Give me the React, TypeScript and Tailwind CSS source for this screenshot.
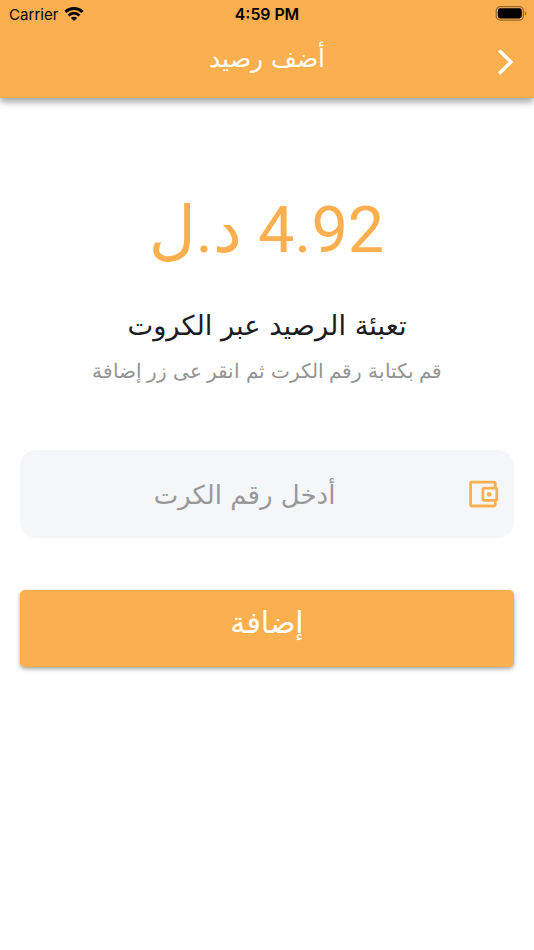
function WifiIcon() {
  return (
    <svg width="20" height="15" viewBox="0 0 20 15" fill="none" stroke="#000" strokeWidth="3">
      <path d="M1.4 4.9C6.3 0.4 13.7 0.4 18.6 4.9" />
      <path d="M4.5 8.5C7.7 5.6 12.3 5.6 15.5 8.5" />
      <path d="M10 14L6.9 10.9C8.7 9.4 11.3 9.4 13.1 10.9Z" fill="#000" stroke="none" />
    </svg>
  );
}

function BatteryIcon() {
  return (
    <svg width="32" height="15" viewBox="0 0 32 15" fill="none">
      <rect x="1.2" y="0.7" width="27.2" height="13.4" rx="4" stroke="#000" strokeOpacity="0.4" strokeWidth="1.2" />
      <rect x="2.8" y="2.3" width="24" height="10.2" rx="2.4" fill="#000" />
      <path d="M29.9 5.2C31.9 6 31.9 8.8 29.9 9.6Z" fill="#000" fillOpacity="0.45" />
    </svg>
  );
}

function WalletIcon() {
  return (
    <svg width="30" height="28" viewBox="0 0 30 28" fill="none" stroke="#fcaf4f" strokeWidth="2.8" strokeLinejoin="round">
      <path d="M26.2 8V3.6C26.2 2.7 25.7 2.2 24.8 2.2H3C2.1 2.2 1.6 2.7 1.6 3.6V24.6C1.6 25.5 2.1 26 3 26H24.8C25.7 26 26.2 25.5 26.2 24.6V20.5" />
      <rect x="13.9" y="8.1" width="13.9" height="12.2" rx="1.6" />
      <circle cx="20.1" cy="14.3" r="2.4" fill="#fcaf4f" stroke="none" />
    </svg>
  );
}

function StatusBar() {
  return (
    <div dir="ltr" className="grid h-[28px] grid-cols-[1fr_80px_1fr] items-center pl-[9px] pr-[7px] font-['Inter',sans-serif] text-black">
      <div className="flex items-center gap-[6px]">
        <span className="pt-px text-[15.1px] leading-none">Carrier</span>
        <WifiIcon />
      </div>
      <span className="pt-px pr-[2px] text-center text-[15.8px] leading-none font-semibold whitespace-nowrap">4:59 PM</span>
      <div className="flex justify-end pb-[2px]">
        <BatteryIcon />
      </div>
    </div>
  );
}

export default function App() {
  return (
    <div dir="rtl" className="h-[950px] w-[534px] overflow-hidden bg-white font-['DejaVu_Sans',sans-serif] font-normal">
      <header className="h-[98px] bg-[#fcaf4f] shadow-[0_4px_7px_rgba(0,0,0,0.36)]">
        <StatusBar />
        <div className="grid h-[70px] grid-cols-[60px_1fr_60px]">
          <button aria-label="رجوع" className="flex items-start pt-[21px] pr-[20px]">
            <svg width="17" height="26" viewBox="0 0 17 26" fill="none" stroke="#fff" strokeWidth="3.3">
              <path d="M2.2 1.5L14 13L2.2 24.5" />
            </svg>
          </button>
          <h1 className="pt-[16px] text-center text-[25px] leading-[30px] font-extralight text-white">أضف رصيد</h1>
        </div>
      </header>

      <main className="px-[20px] text-center">
        <p className="pt-[96px] pr-px font-['Roboto','DejaVu_Sans',sans-serif] text-[64.8px] leading-[72px] whitespace-nowrap text-[#fcaf4f]">
          4.92 د.ل
        </p>
        <h2 className="mt-[42px] text-[27.3px] leading-[36px] whitespace-nowrap text-[#1c1c1f]">تعبئة الرصيد عبر الكروت</h2>
        <p className="mt-[14px] text-[20px] leading-[26px] font-extralight whitespace-nowrap text-[#949494] [word-spacing:-0.8px]">
          قم بكتابة رقم الكرت ثم انقر عى زر إضافة
        </p>

        <div className="mt-[66px] flex h-[88px] items-center rounded-[16px] bg-[#f4f6fa] px-[15px]">
          <WalletIcon />
          <span className="flex-1 pt-px pr-[15px] text-[26px] leading-[36px] text-[#999]">أدخل رقم الكرت</span>
        </div>

        <button className="mt-[52px] flex h-[77px] w-full justify-center rounded-[5px] bg-[#fcaf4f] pt-[15px] text-[30px] leading-[36px] text-white shadow-[0_2px_4px_rgba(0,0,0,0.35)]">
          إضافة
        </button>
      </main>
    </div>
  );
}
